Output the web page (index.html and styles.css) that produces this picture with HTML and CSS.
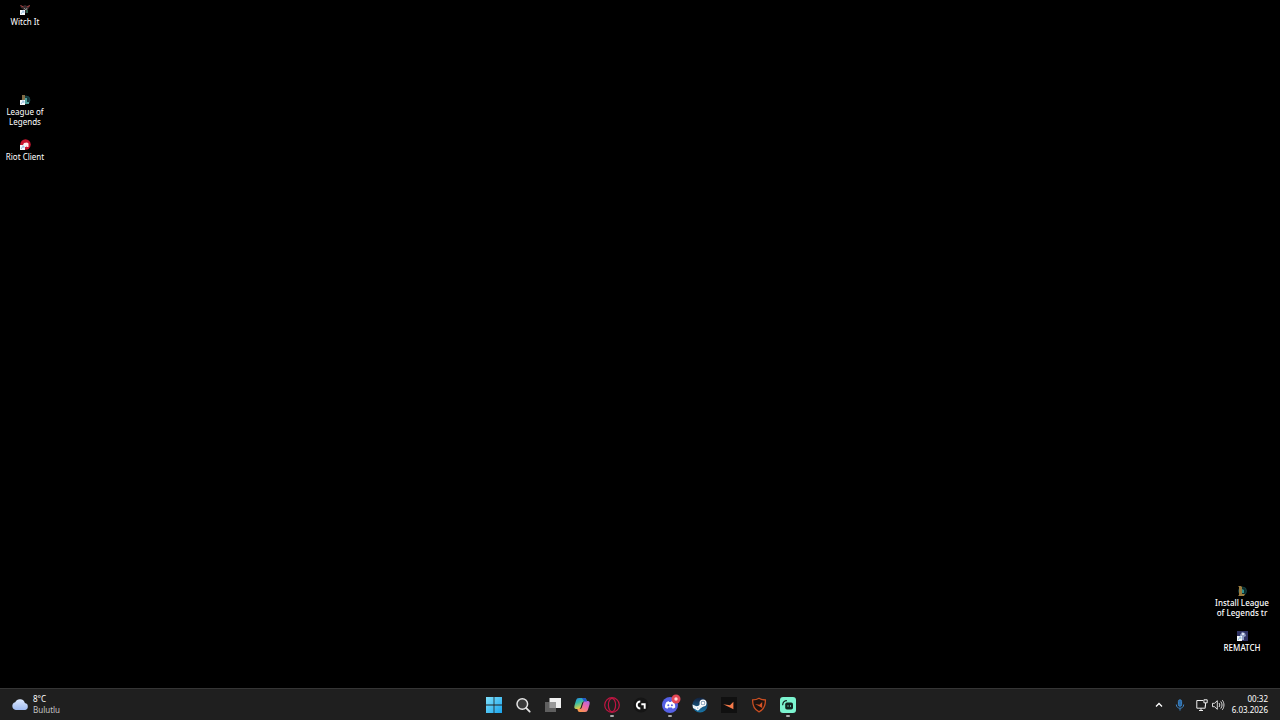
FILE: index.html
```html
<!DOCTYPE html>
<html lang="tr">
<head>
<meta charset="utf-8">
<title>Desktop</title>
<meta name="viewport" content="width=device-width, initial-scale=1">
<link rel="stylesheet" href="styles.css">
</head>
<body>
<svg class="defs" width="0" height="0" aria-hidden="true">
  <defs>
    <symbol id="shortcut" viewBox="0 0 6 6"><rect width="6" height="6" fill="#f4f8fb"/><path d="M1.700 4.800C1.700 3.200 2.300 2.500 3.600 2.500M2.700 1.300H4.600V3.600" fill="none" stroke="#4b93cc" stroke-width=".7"/></symbol>
  </defs>
</svg>
<main class="desktop">
  <div class="icons icons-left">
    <button class="shortcut">
      <svg class="shortcut-art" viewBox="0 0 12 12"><path d="M1 1l3 1 2-1 2 1 3-1-1 3-1 1v4H4V5L2 4z" fill="#38292c"/><path d="M1.500 1.500l3 1.500M11 1.500L8 3" stroke="#a33a3a" stroke-width="1"/><path d="M5 4l2 2 1-2" stroke="#8b9a96" fill="none" stroke-width=".9"/><path d="M7 6h2v3H7z" fill="#265947"/><use href="#shortcut" x="1" y="6" width="5" height="5"/></svg>
      <span class="shortcut-label">Witch It</span>
    </button>
    <span class="empty-cell"></span>
    <button class="shortcut">
      <svg class="shortcut-art" viewBox="0 0 12 12"><circle cx="7" cy="6" r="4" fill="#12363a" stroke="#1d4d50" stroke-width=".7"/><path d="M3 1h3v8H3z" fill="#806b45"/><path d="M6 4h2v4h2v2H5z" fill="#4d9f9b"/><use href="#shortcut" x="1" y="6" width="5" height="5"/></svg>
      <span class="shortcut-label">League of Legends</span>
    </button>
    <button class="shortcut">
      <svg class="shortcut-art" viewBox="0 0 12 12"><circle cx="6.500" cy="5.500" r="5.200" fill="#c9152f"/><path d="M4 6l1-2 3-.5 1.500 1V8H8V6.500L7.500 8H6z" fill="#ffe9ec"/><use href="#shortcut" x="1" y="6" width="5" height="5"/></svg>
      <span class="shortcut-label">Riot Client</span>
    </button>
  </div>
  <div class="icons icons-right">
    <button class="shortcut">
      <svg class="shortcut-art" viewBox="0 0 12 12"><circle cx="6.500" cy="6" r="4" fill="#0c2b2c" stroke="#174a4c" stroke-width=".7"/><path d="M2 1h3l1 1v7h3l-1 2H2l1-1V2z" fill="#9a7c3f"/><path d="M6 4l2 1v3H6z" fill="#31908c"/></svg>
      <span class="shortcut-label">Install League of Legends tr</span>
    </button>
    <button class="shortcut">
      <svg class="shortcut-art" viewBox="0 0 12 12"><path d="M1 1h11v10H1z" fill="#303465"/><path d="M4 5l2-3 3 1 1 3-2 1v3H5z" fill="#919fc4"/><path d="M6 3h2v2H6z" fill="#d9e1f0"/><use href="#shortcut" x="1" y="6" width="5" height="5"/></svg>
      <span class="shortcut-label">REMATCH</span>
    </button>
  </div>
</main>
<footer class="taskbar">
  <button class="weather">
    <svg class="weather-icon" viewBox="0 0 18 14"><defs><linearGradient id="cloud" x2="0" y2="1"><stop stop-color="#dce9ff"/><stop offset="1" stop-color="#9fbaf0"/></linearGradient></defs><path d="M4.800 12a4 4 0 0 1-.6-7.800 5.200 5.200 0 0 1 9.700.8 3.600 3.600 0 0 1 .3 7z" fill="url(#cloud)"/></svg>
    <span class="lines"><span>8°C</span><span class="condition">Bulutlu</span></span>
  </button>
  <nav class="apps" aria-label="Apps">
    <button class="app" aria-label="Start"><svg viewBox="0 0 18 18"><defs><linearGradient id="win" x2="1" y2="1"><stop stop-color="#7fe0fb"/><stop offset="1" stop-color="#19a4ec"/></linearGradient></defs><path d="M1 1h7.600v7.600H1zM9.400 1H17v7.600H9.400zM1 9.400h7.600V17H1zM9.400 9.400H17V17H9.400z" fill="url(#win)"/></svg></button>
    <button class="app" aria-label="Search"><svg viewBox="0 0 18 18"><circle cx="8.300" cy="8" r="5.300" fill="#3a3a3a" stroke="#e4e4e4" stroke-width="1.500"/><path d="M12.300 12.200L15.700 15.600" stroke="#e4e4e4" stroke-width="1.800" stroke-linecap="round"/></svg></button>
    <button class="app" aria-label="Task view"><svg viewBox="0 0 18 18"><path d="M5.500 2H17v10H5.500z" fill="#f0f0f0"/><path d="M1 6h11v10H1z" fill="#666" fill-opacity=".9"/><path d="M5.500 6H12v6H5.500z" fill="#999"/></svg></button>
    <button class="app" aria-label="Copilot"><svg viewBox="0 0 18 18"><defs><linearGradient id="cpa" x2=".4" y2="1"><stop stop-color="#2688e8"/><stop offset=".45" stop-color="#35bca5"/><stop offset="1" stop-color="#f2d23b"/></linearGradient><linearGradient id="cpb" x1="1" x2=".3" y2="1"><stop stop-color="#a863e9"/><stop offset=".5" stop-color="#ec6aa8"/><stop offset="1" stop-color="#fa954c"/></linearGradient></defs><path d="M6 2h5.500c1.200 0 1.600.8 2 2l.5 1.500H11c-1 0-1.600.6-1.900 1.600L7.800 11c-.5 1.700-1.300 2-2.800 2H3.200C1.300 13 1 11.500 1.500 9.500l1.500-5C3.500 2.800 4.300 2 6 2z" fill="url(#cpa)"/><path d="M12 16H6.600c-1.200 0-1.700-.8-2-2l-.4-1.200H7c1 0 1.600-.6 1.900-1.600L10.200 7c.5-1.700 1.300-2 2.800-2h1.800c1.900 0 2.200 1.500 1.700 3.500l-1.500 5c-.5 1.700-1.300 2.500-3 2.500z" fill="url(#cpb)"/><path d="M9 2h2.500c1.200 0 1.600.8 2 2l.5 1.500h-3z" fill="#2456c9"/></svg></button>
    <button class="app running" aria-label="Opera GX"><svg viewBox="0 0 18 18" fill="none" stroke="#c01542"><circle cx="9" cy="9" r="7.300" stroke-width="1.200"/><ellipse cx="9" cy="9" rx="3.600" ry="6.700" stroke-width="1.200"/></svg></button>
    <button class="app" aria-label="Logitech G HUB"><svg viewBox="0 0 18 18"><circle cx="9" cy="9" r="7.500" fill="#151515"/><path d="M8.300 5.500A3.500 3.500 0 1 0 8.300 12.500M9.300 8.300H12.700V12.800" fill="none" stroke="#fff" stroke-width="1.900"/></svg></button>
    <button class="app running" aria-label="Discord"><svg viewBox="0 0 18 18"><circle cx="9" cy="9" r="8" fill="#5560e4"/><path d="M5.300 6.200c1.100-.8 2-.9 2.500-.9l.4.700H10l.4-.7c.7 0 1.600.2 2.500.9 1 1.700 1.500 3.500 1.300 5.400-.9.700-1.800 1-2.500 1.100L11 11.600H7.200l-.7 1.100c-.8-.1-1.700-.4-2.500-1.100-.2-1.900.3-3.700 1.300-5.400z" fill="#fff"/><circle cx="7.300" cy="9.200" r="1" fill="#5560e4"/><circle cx="10.900" cy="9.200" r="1" fill="#5560e4"/></svg><svg class="badge" viewBox="0 0 10 10"><circle cx="5" cy="5" r="4.500" fill="#e34856"/><circle cx="5" cy="5" r="1.700" fill="#ffd9dc"/></svg></button>
    <button class="app" aria-label="Steam"><svg viewBox="0 0 18 18"><defs><linearGradient id="stm" x2="0" y2="1"><stop stop-color="#12203c"/><stop offset="1" stop-color="#1976a8"/></linearGradient></defs><circle cx="9" cy="9" r="7.600" fill="url(#stm)"/><path d="M1.500 8.500l5 2.200 3-3.300 3 2.800-3.500 2.600-2 2L2 12z" fill="#e9f1f6"/><circle cx="12" cy="7" r="2.900" fill="#6f8fae" stroke="#fff" stroke-width="1.200"/><circle cx="12" cy="7" r="1.500" fill="#fff"/><circle cx="6.800" cy="12" r="2" fill="#fff"/><circle cx="6.800" cy="12" r=".6" fill="#1b6797"/></svg></button>
    <button class="app" aria-label="FACEIT"><svg viewBox="0 0 18 18"><path d="M1 1h16v16H1z" fill="#101010"/><path d="M3.200 8.300L10 9.200l3.400-3.400v7.400L9.500 11.200z" fill="#f57a4b"/></svg></button>
    <button class="app" aria-label="FACEIT Anti-cheat"><svg viewBox="0 0 18 18"><path d="M9 2.200c2 1.300 4 1.700 6.400 1.700.2 6.300-1.300 9.600-6.400 12-5.100-2.400-6.600-5.700-6.400-12C5 3.900 7 3.500 9 2.200z" fill="#1c1310" stroke="#c94f23" stroke-width="1.300"/><path d="M5 8l4.500.7L12.200 6v6L9.200 10.300z" fill="#d65325"/></svg></button>
    <button class="app running" aria-label="Streamlabs"><svg viewBox="0 0 18 18"><rect x="1" y="1" width="16" height="16" rx="3" fill="#7cf4d0"/><rect x="6.200" y="6.500" width="7.800" height="7" rx="1.800" fill="#10231f"/><path d="M3.700 8.700C3.900 6.500 5 5 7.400 4.700" fill="none" stroke="#10231f" stroke-width="1.200" stroke-linecap="round"/><path d="M9 9v2M11.500 9v2" stroke="#4fae94" stroke-width="1"/></svg></button>
  </nav>
  <div class="tray">
    <button class="tray-button" aria-label="Hidden icons"><svg viewBox="0 0 14 14"><path d="M4 8.500l3-3 3 3" fill="none" stroke="#fff" stroke-width="1.300"/></svg></button>
    <button class="tray-button mic" aria-label="Microphone"><svg viewBox="0 0 14 14" fill="none" stroke="#3e84c4"><rect x="5.400" y="1.800" width="3.200" height="6.500" rx="1.600" fill="#2b6ba8"/><path d="M3.300 6.500c0 5 7.400 5 7.400 0M7 10.300v2.300"/></svg></button>
    <button class="tray-button status" aria-label="Network and volume"><svg viewBox="0 0 14 14" fill="none" stroke="#eee"><path d="M8 2.500H1.800v7.700h8.400V7.500M4 12.500h4M6 10.200v2.300"/><path d="M8.900 1.800h3.300v3H8.900zM10.500 5v3.500"/></svg><svg viewBox="0 0 14 14" fill="none" stroke="#eee"><path d="M1.500 5.300h2L6.300 2.700v8.600L3.500 8.700h-2zM8 5c1 1.200 1 2.800 0 4M9.700 3.500c1.800 2 1.800 5 0 7M11.300 2.200c2.200 2.800 2.200 6.800 0 9.600" stroke-width=".9"/></svg></button>
    <button class="clock lines"><span>00:32</span><span>6.03.2026</span></button>
  </div>
</footer>
</body>
</html>
```
FILE: styles.css
```css
* { box-sizing: border-box; }

body {
  margin: 0;
  min-height: 100vh;
  display: flex;
  flex-direction: column;
  background: #000;
  color: #fff;
  font: 8px/10px "Noto Sans", "Open Sans", sans-serif;
}

button {
  margin: 0;
  padding: 0;
  border: 0;
  background: none;
  color: inherit;
  font: inherit;
}

svg { display: block; }
.defs { position: absolute; }

.desktop {
  flex: 1;
  display: flex;
  justify-content: space-between;
}

.icons {
  display: grid;
  grid-auto-rows: 45px;
  width: 50px;
}

.icons-left { align-content: start; }

.icons-right {
  align-content: end;
  width: 60px;
  margin: 0 8px 17px 0;
}

.shortcut {
  display: flex;
  flex-direction: column;
  align-items: center;
  justify-content: flex-start;
  gap: 1px;
  padding-top: 4px;
}

.shortcut-art {
  width: 12px;
  height: 12px;
}

.shortcut-label { text-align: center; }
.icons-right .shortcut-label { font-weight: 500; }

.taskbar {
  display: grid;
  grid-template-columns: 1fr 324px 1fr;
  height: 32px;
  border-top: 1px solid #353535;
  background: #1f1f1f;
}

.weather {
  display: flex;
  align-items: center;
  justify-self: start;
  gap: 4px;
  padding-left: 11px;
  text-align: left;
}

.weather-icon {
  width: 18px;
  height: 14px;
}

.lines {
  display: flex;
  flex-direction: column;
  justify-content: center;
  padding-bottom: 2px;
  line-height: 11px;
}

.condition { color: #c4c4c4; }

.apps {
  display: grid;
  grid-template-columns: repeat(11, 1fr);
  margin: 0 -1px 0 1px;
}

.app {
  position: relative;
  display: grid;
  place-items: center;
}

.app > svg {
  width: 18px;
  height: 18px;
}

.running::after {
  content: "";
  position: absolute;
  bottom: 3px;
  left: 50%;
  width: 4px;
  height: 2px;
  margin-left: -2px;
  border-radius: 1px;
  background: #aaa;
}

.app > .badge {
  position: absolute;
  top: 5px;
  right: 4px;
  width: 10px;
  height: 10px;
}

.tray {
  display: flex;
  align-items: center;
  justify-content: flex-end;
  padding-right: 12px;
}

.tray-button {
  display: flex;
  gap: 2px;
}

.tray-button svg {
  width: 14px;
  height: 14px;
}

.mic { margin-left: 7px; }
.status { margin-left: 8px; }

.clock {
  height: 100%;
  margin-left: 7px;
  text-align: right;
}
```
